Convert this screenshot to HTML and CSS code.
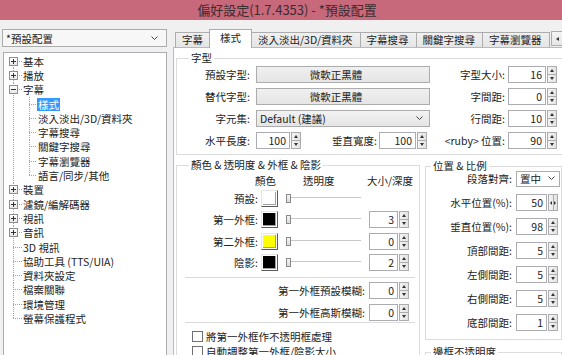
FILE: index.html
```html
<!DOCTYPE html>
<html lang="zh-Hant">
<head>
  <meta charset="UTF-8" />
  <title>偏好設定</title>
  <link rel="stylesheet" href="styles.css">
</head>
<body>
  <div class="titlebar">偏好設定(1.7.4353) - *預設配置</div>

  <div class="main">
    <!-- left: profile + tree -->
    <aside class="side">
      <div class="combo profile">
        <span>*預設配置</span>
        <svg class="chev" width="7" height="5" viewBox="0 0 7 5"><path d="M.5 .5 3.5 3.5 6.5 .5" fill="none" stroke="#444"/></svg>
      </div>
      <div class="tree">
        <div class="node"><span class="gut first"><i class="exp"></i></span><span class="t">基本</span></div>
        <div class="node"><span class="gut"><i class="exp"></i></span><span class="t">播放</span></div>
        <div class="node"><span class="gut"><i class="exp open"></i></span><span class="t">字幕</span></div>
        <div class="node"><span class="gut child"></span><span class="t sel">樣式</span></div>
        <div class="node"><span class="gut child"></span><span class="t">淡入淡出/3D/資料夾</span></div>
        <div class="node"><span class="gut child"></span><span class="t">字幕搜尋</span></div>
        <div class="node"><span class="gut child"></span><span class="t">關鍵字搜尋</span></div>
        <div class="node"><span class="gut child"></span><span class="t">字幕瀏覽器</span></div>
        <div class="node"><span class="gut child lastchild"></span><span class="t">語言/同步/其他</span></div>
        <div class="node"><span class="gut"><i class="exp"></i></span><span class="t">裝置</span></div>
        <div class="node"><span class="gut"><i class="exp"></i></span><span class="t">濾鏡/編解碼器</span></div>
        <div class="node"><span class="gut"><i class="exp"></i></span><span class="t">視訊</span></div>
        <div class="node"><span class="gut"><i class="exp"></i></span><span class="t">音訊</span></div>
        <div class="node"><span class="gut"></span><span class="t">3D 視訊</span></div>
        <div class="node"><span class="gut"></span><span class="t">協助工具 (TTS/UIA)</span></div>
        <div class="node"><span class="gut"></span><span class="t">資料夾設定</span></div>
        <div class="node"><span class="gut"></span><span class="t">檔案關聯</span></div>
        <div class="node"><span class="gut"></span><span class="t">環境管理</span></div>
        <div class="node"><span class="gut last"></span><span class="t">螢幕保護程式</span></div>
      </div>
    </aside>

    <!-- right: tabs + page -->
    <section class="content">
      <div class="tabs">
        <span class="tab">字幕</span>
        <span class="tab active">樣式</span>
        <span class="tab">淡入淡出/3D/資料夾</span>
        <span class="tab">字幕搜尋</span>
        <span class="tab">關鍵字搜尋</span>
        <span class="tab">字幕瀏覽器</span>
        <span class="tab-scroll"><i></i></span>
      </div>

      <div class="page">
        <fieldset class="grp font-grp">
          <legend>字型</legend>
          <div class="frow">
            <span class="lbl lbl-main">預設字型:</span>
            <span class="fbtn">微軟正黑體</span>
            <span class="lbl lbl-side">字型大小:</span>
            <span class="spin s49"><span class="val">16</span><span class="ud"><i class="up"></i><i class="dn"></i></span></span>
          </div>
          <div class="frow">
            <span class="lbl lbl-main">替代字型:</span>
            <span class="fbtn">微軟正黑體</span>
            <span class="lbl lbl-side">字間距:</span>
            <span class="spin s49"><span class="val">0</span><span class="ud"><i class="up"></i><i class="dn"></i></span></span>
          </div>
          <div class="frow">
            <span class="lbl lbl-main">字元集:</span>
            <span class="combo wide"><span>Default (建議)</span><svg class="chev" width="7" height="5" viewBox="0 0 7 5"><path d="M.5 .5 3.5 3.5 6.5 .5" fill="none" stroke="#444"/></svg></span>
            <span class="lbl lbl-side">行間距:</span>
            <span class="spin s49"><span class="val">10</span><span class="ud"><i class="up"></i><i class="dn"></i></span></span>
          </div>
          <div class="frow">
            <span class="lbl lbl-main">水平長度:</span>
            <span class="spin s45"><span class="val">100</span><span class="ud"><i class="up"></i><i class="dn"></i></span></span>
            <span class="lbl lbl-mid">垂直寬度:</span>
            <span class="spin s48"><span class="val">100</span><span class="ud"><i class="up"></i><i class="dn"></i></span></span>
            <span class="lbl lbl-side2">&lt;ruby&gt; 位置:</span>
            <span class="spin s49"><span class="val">90</span><span class="ud"><i class="up"></i><i class="dn"></i></span></span>
          </div>
        </fieldset>

        <div class="cols">
          <fieldset class="grp color-grp">
            <legend>顏色 &amp; 透明度 &amp; 外框 &amp; 陰影</legend>
            <div class="chead">
              <span class="h-color">顏色</span>
              <span class="h-alpha">透明度</span>
              <span>大小/深度</span>
            </div>
            <div class="crow">
              <span class="lbl clbl">預設:</span>
              <span class="sw"><i class="c-white"></i></span>
              <span class="slider"><i></i></span>
            </div>
            <div class="crow">
              <span class="lbl clbl">第一外框:</span>
              <span class="sw"><i class="c-black"></i></span>
              <span class="slider"><i></i></span>
              <span class="spin s40"><span class="val">3</span><span class="ud"><i class="up"></i><i class="dn"></i></span></span>
            </div>
            <div class="crow">
              <span class="lbl clbl">第二外框:</span>
              <span class="sw"><i class="c-yellow"></i></span>
              <span class="slider"><i></i></span>
              <span class="spin s40"><span class="val">0</span><span class="ud"><i class="up"></i><i class="dn"></i></span></span>
            </div>
            <div class="crow">
              <span class="lbl clbl">陰影:</span>
              <span class="sw"><i class="c-black"></i></span>
              <span class="slider"><i></i></span>
              <span class="spin s40"><span class="val">2</span><span class="ud"><i class="up"></i><i class="dn"></i></span></span>
            </div>
            <div class="blur">
              <div class="brow">
                <span class="lbl blbl">第一外框預設模糊:</span>
                <span class="spin s40"><span class="val">0</span><span class="ud"><i class="up"></i><i class="dn"></i></span></span>
              </div>
              <div class="brow">
                <span class="lbl blbl">第一外框高斯模糊:</span>
                <span class="spin s40"><span class="val">0</span><span class="ud"><i class="up"></i><i class="dn"></i></span></span>
              </div>
            </div>
            <div class="check"><i class="box"></i>將第一外框作不透明框處理</div>
            <div class="check"><i class="box"></i>自動調整第一外框/陰影大小</div>
          </fieldset>

          <div class="rightcol">
            <fieldset class="grp pos-grp">
              <legend>位置 &amp; 比例</legend>
              <div class="prow">
                <span class="lbl plbl">段落對齊:</span>
                <span class="combo pcombo"><span>置中</span><svg class="chev" width="7" height="5" viewBox="0 0 7 5"><path d="M.5 .5 3.5 3.5 6.5 .5" fill="none" stroke="#444"/></svg></span>
              </div>
              <div class="prow">
                <span class="lbl plbl">水平位置(%):</span>
                <span class="spin s42"><span class="val">50</span><span class="ud horiz"><i class="lt"></i><i class="rt"></i></span></span>
              </div>
              <div class="prow">
                <span class="lbl plbl">垂直位置(%):</span>
                <span class="spin s42"><span class="val">98</span><span class="ud"><i class="up"></i><i class="dn"></i></span></span>
              </div>
              <div class="prow">
                <span class="lbl plbl">頂部間距:</span>
                <span class="spin s42"><span class="val">5</span><span class="ud"><i class="up"></i><i class="dn"></i></span></span>
              </div>
              <div class="prow">
                <span class="lbl plbl">左側間距:</span>
                <span class="spin s42"><span class="val">5</span><span class="ud"><i class="up"></i><i class="dn"></i></span></span>
              </div>
              <div class="prow">
                <span class="lbl plbl">右側間距:</span>
                <span class="spin s42"><span class="val">5</span><span class="ud"><i class="up"></i><i class="dn"></i></span></span>
              </div>
              <div class="prow">
                <span class="lbl plbl">底部間距:</span>
                <span class="spin s42"><span class="val">1</span><span class="ud"><i class="up"></i><i class="dn"></i></span></span>
              </div>
            </fieldset>
            <fieldset class="grp opa-grp">
              <legend>邊框不透明度</legend>
            </fieldset>
          </div>
        </div>
      </div>
    </section>
  </div>
</body>
</html>
```

FILE: styles.css
```css
/* BASE */
* {
  margin: 0;
  padding: 0;
  box-sizing: border-box;
}
body {
  width: 562px;
  height: 355px;
  overflow: hidden;
  background: #f0f0f0;
  font-family: "Noto Sans CJK TC", "Noto Sans", sans-serif;
  font-size: 10.5px;
  line-height: 13px;
  color: #222;
}
i {
  font-style: normal;
}

/* TITLE BAR */
.titlebar {
  height: 20px;
  background: #c8687b;
  color: #3b2c30;
  font-size: 13px;
  line-height: 20px;
  text-align: center;
  padding-left: 12px;
}

.main {
  display: flex;
  padding-top: 9px;
}

/* LEFT SIDE */
.side {
  flex: none;
  width: 167px;
  padding-left: 2px;
}
.combo {
  display: flex;
  align-items: center;
  height: 17px;
  border: 1px solid #acacac;
  background: linear-gradient(#f2f2f2, #e5e5e5);
  padding: 0 6px 0 3px;
}
.combo span {
  flex: 1;
}
.combo.profile {
  height: 18px;
  background: #f7f7f7;
  padding-right: 8px;
}
.chev {
  flex: none;
}

.tree {
  margin: 5px 0 0 1px;
  height: 320px;
  border: 1px solid #abadb3;
  background: #fff;
  padding-top: 1px;
}
.node {
  display: flex;
  align-items: center;
  height: 14.3px;
}
.gut {
  --dv: repeating-linear-gradient(to bottom, #a3a3a3 0 1px, transparent 1px 2px);
  --dh: repeating-linear-gradient(to right, #a3a3a3 0 1px, transparent 1px 2px);
  flex: none;
  align-self: stretch;
  width: 18px;
  display: flex;
  align-items: center;
  background: var(--dv) 9px 0 / 1px 100% no-repeat,
              var(--dh) 9px 50% / 9px 1px no-repeat;
}
.gut.first {
  background: var(--dv) 9px 100% / 1px 50% no-repeat,
              var(--dh) 9px 50% / 9px 1px no-repeat;
}
.gut.last {
  background: var(--dv) 9px 0 / 1px 50% no-repeat,
              var(--dh) 9px 50% / 9px 1px no-repeat;
}
.gut.child {
  width: 33px;
  background: var(--dv) 9px 0 / 1px 100% no-repeat,
              var(--dv) 25px 0 / 1px 100% no-repeat,
              var(--dh) 25px 50% / 8px 1px no-repeat;
}
.gut.child.lastchild {
  background: var(--dv) 9px 0 / 1px 100% no-repeat,
              var(--dv) 25px 0 / 1px 50% no-repeat,
              var(--dh) 25px 50% / 8px 1px no-repeat;
}
.exp {
  width: 9px;
  height: 9px;
  margin-left: 5px;
  border: 1px solid #8f8f8f;
  background: linear-gradient(#333, #333) center / 5px 1px no-repeat,
              linear-gradient(#333, #333) center / 1px 5px no-repeat,
              linear-gradient(#fff, #e8e8e8);
}
.exp.open {
  background: linear-gradient(#333, #333) center / 5px 1px no-repeat,
              linear-gradient(#fff, #e8e8e8);
}
.t {
  padding: 0 1px;
  line-height: 13px;
  white-space: nowrap;
}
.t.sel {
  background: #3399ff;
  color: #fff;
}

/* TABS */
.content {
  flex: none;
  width: 400px;
  margin-left: 6px;
}
.tabs {
  display: flex;
  align-items: flex-end;
  height: 18px;
  padding-left: 2px;
}
.tab {
  flex: none;
  height: 15px;
  padding: 0 7px 0 6px;
  margin-right: -1px;
  border: 1px solid #acacac;
  border-bottom: none;
  background: linear-gradient(#f0f0f0, #e5e5e5);
  line-height: 14px;
  white-space: nowrap;
}
.tab.active {
  position: relative;
  height: 19px;
  margin: 0 -2px -1px -1px;
  padding: 0 10px;
  background: #fff;
  line-height: 15px;
  z-index: 1;
}
.tab.active + .tab {
  margin-left: 1px;
}
.tab-scroll {
  flex: none;
  width: 14px;
  height: 15px;
  margin: 0 0 1px 2px;
  border: 1px solid #acacac;
  background: linear-gradient(#f4f4f4, #e6e6e6);
  display: flex;
  align-items: center;
  justify-content: center;
}
.tab-scroll i {
  border-top: 2.5px solid transparent;
  border-bottom: 2.5px solid transparent;
  border-right: 3px solid #333;
}

/* PAGE */
.page {
  height: 320px;
  border: 1px solid #b9b9b9;
  background: #fff;
  padding: 4px 0 0 2px;
}
.grp {
  border: 1px solid #dcdcdc;
  padding: 0;
}
.grp legend {
  margin-left: 12px;
  padding: 0 2px;
  line-height: 12px;
}
.lbl {
  flex: none;
  text-align: right;
  white-space: nowrap;
}

/* font group */
.font-grp {
  width: 392px;
  padding-bottom: 5px;
}
.frow {
  display: flex;
  align-items: center;
  height: 17px;
  margin-top: 5px;
}
.font-grp .frow:first-of-type {
  margin-top: 2px;
}
.lbl-main {
  width: 73px;
  margin-right: 6px;
}
.lbl-side {
  width: 75px;
  margin-right: 3px;
}
.lbl-mid {
  width: 76px;
  margin-right: 2px;
}
.lbl-side2 {
  width: 78px;
  margin-right: 3px;
}
.fbtn {
  flex: none;
  width: 174px;
  height: 17px;
  border: 1px solid #acacac;
  background: linear-gradient(#f0f0f0, #e5e5e5);
  text-align: center;
  line-height: 15px;
  padding-right: 14px;
}
.combo.wide {
  flex: none;
  width: 174px;
  padding-left: 3px;
}

/* spin boxes */
.spin {
  flex: none;
  display: flex;
  height: 17px;
}
.s40 { width: 40px; }
.s42 { width: 42px; }
.s45 { width: 45px; }
.s48 { width: 48px; }
.s49 { width: 49px; }
.spin .val {
  flex: 1;
  background: #fff;
  border: 1px solid #abadb3;
  text-align: right;
  padding-right: 3px;
  line-height: 15px;
}
.ud {
  flex: none;
  width: 10px;
  margin-left: 1px;
  display: flex;
  flex-direction: column;
  border: 1px solid #acacac;
  background: linear-gradient(to right, #f3f3f3, #e4e4e4);
}
.ud i {
  flex: 1;
  display: flex;
  align-items: center;
  justify-content: center;
}
.ud i + i {
  border-top: 1px solid #acacac;
}
.ud .up::before {
  content: "";
  border-left: 2.5px solid transparent;
  border-right: 2.5px solid transparent;
  border-bottom: 3px solid #333;
}
.ud .dn::before {
  content: "";
  border-left: 2.5px solid transparent;
  border-right: 2.5px solid transparent;
  border-top: 3px solid #333;
}
.ud.horiz {
  flex-direction: row;
}
.ud.horiz i + i {
  border-top: none;
  border-left: 1px solid #acacac;
}
.ud .lt::before {
  content: "";
  border-top: 2.5px solid transparent;
  border-bottom: 2.5px solid transparent;
  border-right: 2px solid #333;
}
.ud .rt::before {
  content: "";
  border-top: 2.5px solid transparent;
  border-bottom: 2.5px solid transparent;
  border-left: 2px solid #333;
}

/* COLOR + POSITION COLUMNS */
.cols {
  display: flex;
  align-items: flex-start;
  margin-top: 4px;
}
.color-grp {
  flex: none;
  width: 244px;
  height: 220px;
}
.chead {
  display: flex;
  height: 14px;
  margin-top: 3px;
  padding-left: 78px;
}
.h-color {
  width: 48px;
}
.h-alpha {
  width: 64px;
}
.crow {
  display: flex;
  align-items: center;
  height: 17px;
  margin-top: 4.3px;
}
.chead + .crow {
  margin-top: 2px;
}
.clbl {
  width: 81px;
  margin-right: 3px;
}
.sw {
  flex: none;
  width: 17px;
  height: 17px;
  padding: 1px;
  border: 1px solid;
  border-color: #e6e6e6 #5a5a5a #5a5a5a #e6e6e6;
  background: #fff;
  margin-right: 8px;
}
.sw i {
  display: block;
  height: 100%;
  border-right: 1px solid #a0a0a0;
  border-bottom: 1px solid #a0a0a0;
}
.c-white { background: #fff; }
.c-black { background: #000; }
.c-yellow { background: #ffff00; }
.slider {
  flex: none;
  width: 75px;
  height: 17px;
  margin-right: 8px;
  display: flex;
  align-items: center;
  background: linear-gradient(#c8c8c8, #c8c8c8) 4px 7px / 71px 1px no-repeat,
              linear-gradient(#fff, #fff) 4px 8px / 71px 1px no-repeat;
}
.slider i {
  width: 5px;
  height: 9px;
  border: 1px solid #8a8a8a;
  background: linear-gradient(#f4f4f4, #dcdcdc);
}
.blur {
  margin: 6px 0 0 8px;
  width: 230px;
  border-top: 1px solid #dcdcdc;
  border-bottom: 1px solid #dcdcdc;
  padding: 4px 0 1px;
}
.brow {
  display: flex;
  align-items: center;
  height: 17px;
}
.brow + .brow {
  margin-top: 5px;
}
.blbl {
  width: 180px;
  margin-right: 4px;
}
.check {
  display: flex;
  align-items: center;
  height: 14px;
  margin: 7px 0 0 15px;
  white-space: nowrap;
}
.check + .check {
  margin-top: 1px;
}
.check .box {
  width: 11px;
  height: 11px;
  margin-right: 3px;
  border: 1px solid #707070;
  background: #fff;
}

.rightcol {
  flex: none;
  margin-left: 5px;
  padding-top: 1px;
}
.pos-grp {
  width: 137px;
  padding-bottom: 8px;
}
.pos-grp legend,
.opa-grp legend {
  margin-left: 5px;
}
.prow {
  display: flex;
  align-items: center;
  height: 17px;
  margin-top: 7px;
}
.pos-grp .prow:first-of-type {
  margin-top: -2px;
}
.plbl {
  width: 86px;
  margin-right: 4px;
}
.combo.pcombo {
  flex: none;
  width: 44px;
  height: 16px;
  padding: 0 4px 0 3px;
  background: #fff;
}
.opa-grp {
  width: 137px;
  height: 40px;
  margin-top: 6px;
}
```
